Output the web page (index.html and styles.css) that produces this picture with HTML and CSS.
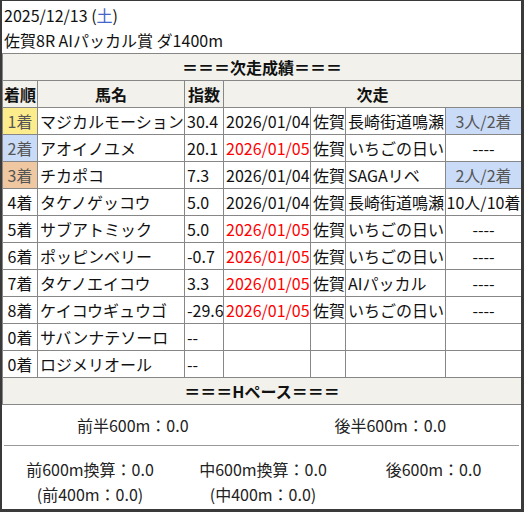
FILE: index.html
```html
<!DOCTYPE html>
<html lang="ja">
<head>
<meta charset="utf-8">
<link rel="stylesheet" href="styles.css">
</head>
<body>
<div class="frame">
  <div class="title">
    <div class="line">2025/12/13 (<span class="sat">土</span>)</div>
    <div class="line">佐賀8R AIパッカル賞 ダ1400m</div>
  </div>
  <table class="results">
    <colgroup>
      <col class="c-rank"><col class="c-name"><col class="c-idx"><col class="c-date"><col class="c-place"><col class="c-race"><col class="c-res">
    </colgroup>
    <tr><th colspan="7" class="section">＝＝＝次走成績＝＝＝</th></tr>
    <tr class="head"><th>着順</th><th>馬名</th><th>指数</th><th colspan="4">次走</th></tr>
    <tr><td class="rank r1">1着</td><td>マジカルモーション</td><td>30.4</td><td>2026/01/04</td><td>佐賀</td><td>長崎街道鳴瀬</td><td class="res hl">3人/2着</td></tr>
    <tr><td class="rank r2">2着</td><td>アオイノユメ</td><td>20.1</td><td class="red">2026/01/05</td><td>佐賀</td><td>いちごの日い</td><td class="res">----</td></tr>
    <tr><td class="rank r3">3着</td><td>チカポコ</td><td>7.3</td><td>2026/01/04</td><td>佐賀</td><td>SAGAリベ</td><td class="res hl">2人/2着</td></tr>
    <tr><td class="rank">4着</td><td>タケノゲッコウ</td><td>5.0</td><td>2026/01/04</td><td>佐賀</td><td>長崎街道鳴瀬</td><td class="res">10人/10着</td></tr>
    <tr><td class="rank">5着</td><td>サブアトミック</td><td>5.0</td><td class="red">2026/01/05</td><td>佐賀</td><td>いちごの日い</td><td class="res">----</td></tr>
    <tr><td class="rank">6着</td><td>ポッピンベリー</td><td>-0.7</td><td class="red">2026/01/05</td><td>佐賀</td><td>いちごの日い</td><td class="res">----</td></tr>
    <tr><td class="rank">7着</td><td>タケノエイコウ</td><td>3.3</td><td class="red">2026/01/05</td><td>佐賀</td><td>AIパッカル</td><td class="res">----</td></tr>
    <tr><td class="rank">8着</td><td>ケイコウギュウゴ</td><td>-29.6</td><td class="red">2026/01/05</td><td>佐賀</td><td>いちごの日い</td><td class="res">----</td></tr>
    <tr><td class="rank">0着</td><td>サバンナテソーロ</td><td>--</td><td></td><td></td><td></td><td></td></tr>
    <tr><td class="rank">0着</td><td>ロジメリオール</td><td>--</td><td></td><td></td><td></td><td></td></tr>
    <tr><th colspan="7" class="section">＝＝＝Hペース＝＝＝</th></tr>
  </table>
  <div class="halves">
    <div class="half">前半600m：0.0</div>
    <div class="half">後半600m：0.0</div>
  </div>
  <div class="thirds">
    <div class="third">前600m換算：0.0<br>(前400m：0.0)</div>
    <div class="third">中600m換算：0.0<br>(中400m：0.0)</div>
    <div class="third">後600m：0.0</div>
  </div>
</div>
</body>
</html>
```

FILE: styles.css
```css
html, body {
  margin: 0;
  padding: 0;
  background: #ffffff;
}
body {
  font-family: "Noto Sans CJK JP", "Noto Sans", sans-serif;
  font-size: 16px;
  color: #111;
}
.frame {
  box-sizing: border-box;
  width: 524px;
  height: 512px;
  border-style: solid;
  border-color: #3a3a3a;
  border-width: 1px 3px 3px 2px;
  background: #fff;
  overflow: hidden;
}
.title {
  padding: 2px 2px 0 2px;
}
.title .line {
  line-height: 25px;
  height: 25px;
}
.sat {
  color: #4564c8;
}
.results {
  border-collapse: collapse;
  table-layout: fixed;
  width: 519px;
}
.c-rank { width: 35px; }
.c-name { width: 147px; }
.c-idx { width: 39px; }
.c-date { width: 87px; }
.c-place { width: 35px; }
.c-race { width: 100px; }
.c-res { width: 76px; }
.results th,
.results td {
  border: 1px solid #878787;
  height: 24px;
  line-height: 24px;
  padding: 1px 0 1px 2px;
  white-space: nowrap;
  overflow: hidden;
  text-align: left;
  font-weight: normal;
}
.results th {
  background: #f2f1ec;
  font-weight: bold;
  text-align: center;
  padding-left: 0;
}
.results td.rank {
  text-align: center;
  padding-left: 0;
}
.results td.res {
  text-align: center;
  padding-left: 0;
}
.r1 { background: #fdec8c; color: #555; }
.r2 { background: #c9dbf7; color: #555; }
.r3 { background: #efc8a1; color: #555; }
.results td.hl { background: #c9dbf7; color: #555; }
.red { color: #ff0000; }
.halves {
  display: grid;
  grid-template-columns: 1fr 1fr;
  margin: 0 2px 0 2px;
  height: 40px;
  border-bottom: 1px solid #9a9a9a;
  align-items: center;
  text-align: center;
  color: #222;
}
.thirds {
  display: grid;
  grid-template-columns: 176px 170px 1fr;
  padding: 11px 2px 0 0;
  line-height: 25px;
  text-align: center;
  color: #222;
}
```
